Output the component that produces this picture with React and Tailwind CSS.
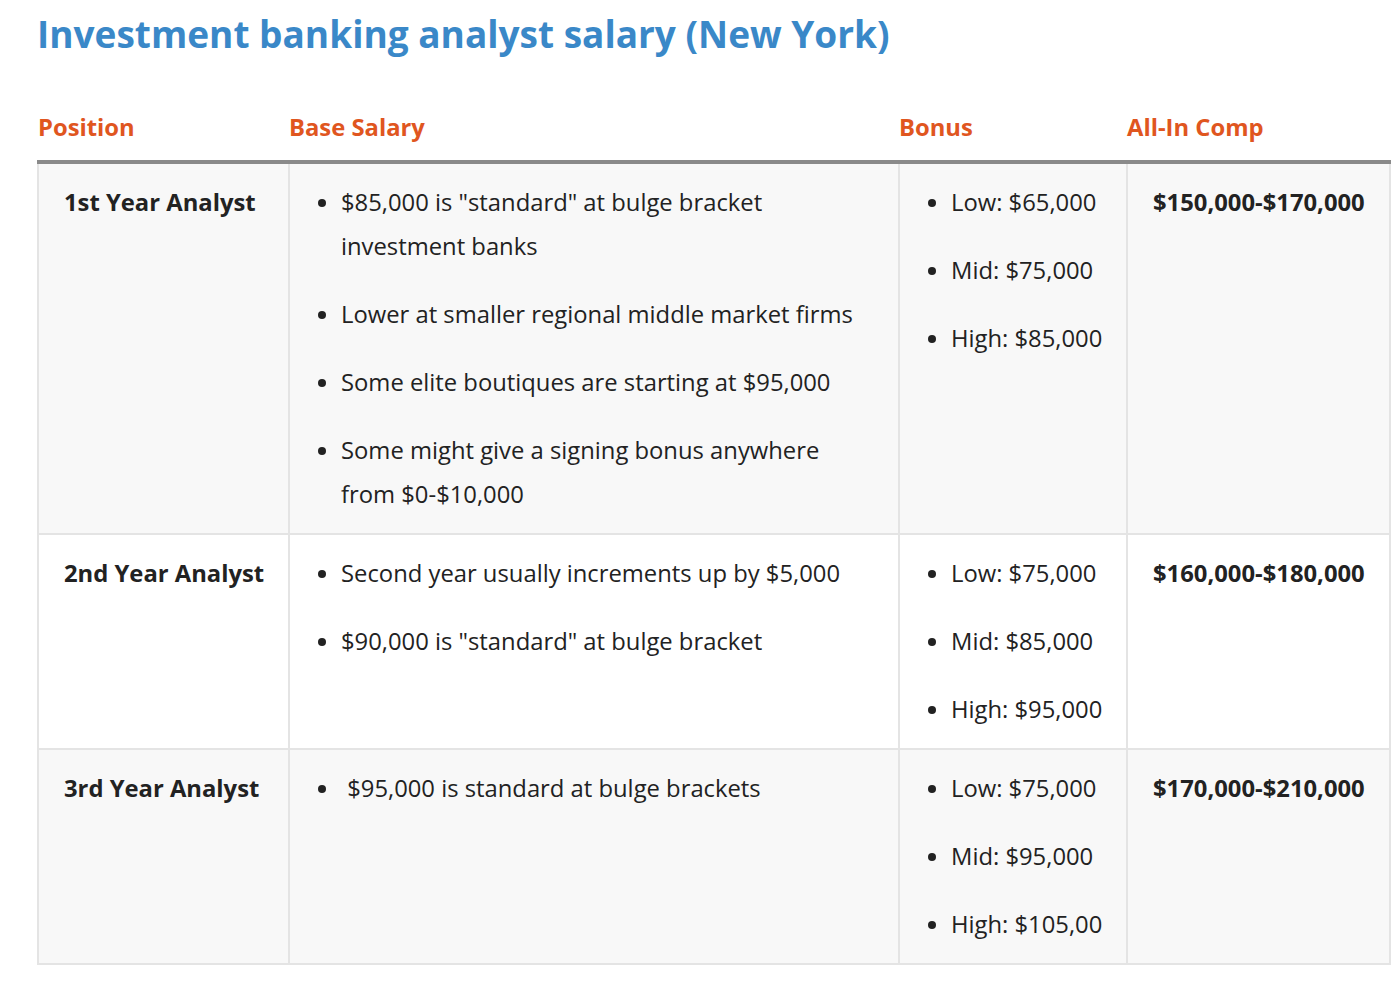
import React from "react";

const rows = [
  {
    position: "1st Year Analyst",
    base: [
      '$85,000 is "standard" at bulge bracket investment banks',
      "Lower at smaller regional middle market firms",
      "Some elite boutiques are starting at $95,000",
      "Some might give a signing bonus anywhere from $0-$10,000",
    ],
    bonus: ["Low: $65,000", "Mid: $75,000", "High: $85,000"],
    comp: "$150,000-$170,000",
    bg: "bg-[#f8f8f8]",
  },
  {
    position: "2nd Year Analyst",
    base: [
      "Second year usually increments up by $5,000",
      '$90,000 is "standard" at bulge bracket',
    ],
    bonus: ["Low: $75,000", "Mid: $85,000", "High: $95,000"],
    comp: "$160,000-$180,000",
    bg: "bg-white",
  },
  {
    position: "3rd Year Analyst",
    base: ["\u00a0$95,000 is standard at bulge brackets"],
    bonus: ["Low: $75,000", "Mid: $95,000", "High: $105,00"],
    comp: "$170,000-$210,000",
    bg: "bg-[#f8f8f8]",
  },
];

function Bullets({ items }) {
  return (
    <ul className="list-disc pl-[26px] m-0 space-y-[24px]">
      {items.map((t, i) => (
        <li key={i}>{t}</li>
      ))}
    </ul>
  );
}

export default function App() {
  const cell =
    "align-top border-2 border-[#e4e4e4] pt-[16px] pb-[17px] px-[25px]";
  return (
    <div
      className="min-h-screen bg-white pl-[37px] pr-[10px] pt-[10px] text-[#222]"
      style={{ fontFamily: '"Open Sans", "Noto Sans", sans-serif' }}
    >
      <h1 className="text-[37px] leading-[48px] font-bold text-[#3a88c8] m-0">
        Investment banking analyst salary (New York)
      </h1>

      <table className="table-fixed border-collapse w-[1352px] mt-[47px] text-[23.8px] leading-[44px]">
        <colgroup>
          <col className="w-[251px]" />
          <col className="w-[610px]" />
          <col className="w-[228px]" />
          <col className="w-[263px]" />
        </colgroup>
        <thead>
          <tr className="border-b-4 border-[#8a8a8a] text-left text-[#e0561f] font-bold">
            <th className="p-0 pb-[11px] font-bold">Position</th>
            <th className="p-0 pb-[11px] font-bold">Base Salary</th>
            <th className="p-0 pb-[11px] font-bold">Bonus</th>
            <th className="p-0 pb-[11px] font-bold">All-In Comp</th>
          </tr>
        </thead>
        <tbody>
          {rows.map((r) => (
            <tr key={r.position} className={r.bg}>
              <td className={`${cell} font-bold whitespace-nowrap`}>
                {r.position}
              </td>
              <td className={cell}>
                <Bullets items={r.base} />
              </td>
              <td className={`${cell} whitespace-nowrap`}>
                <Bullets items={r.bonus} />
              </td>
              <td className={`${cell} font-bold whitespace-nowrap`}>
                {r.comp}
              </td>
            </tr>
          ))}
        </tbody>
      </table>
    </div>
  );
}
